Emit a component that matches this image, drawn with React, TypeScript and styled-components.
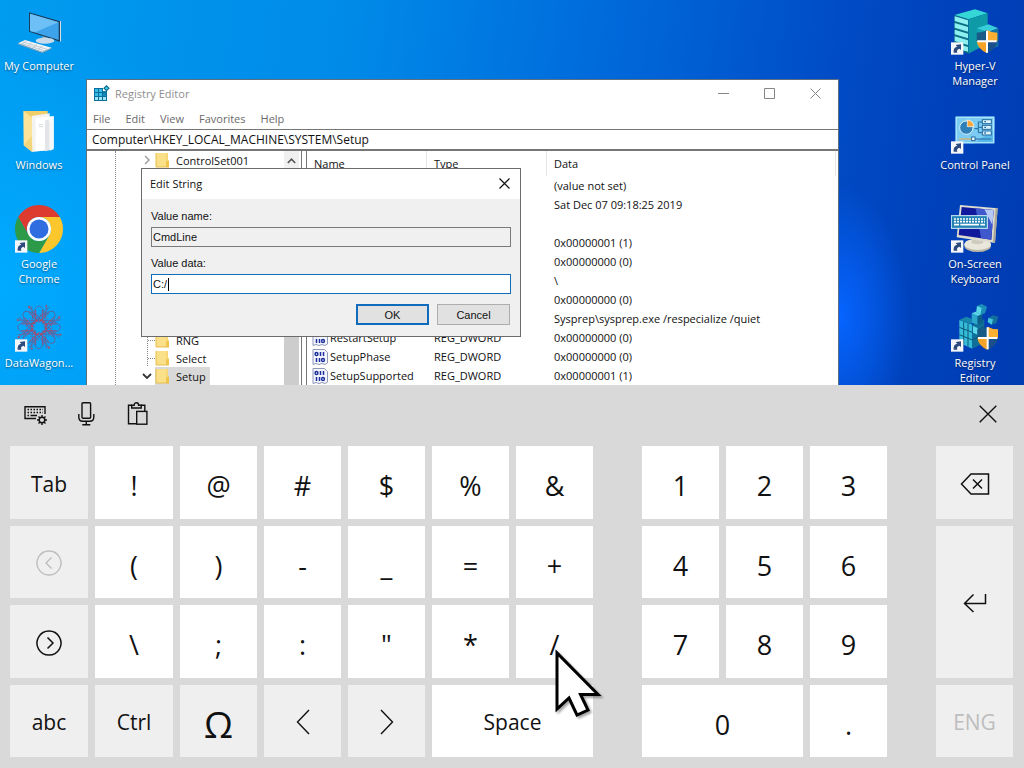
import React from "react";
import styled, { createGlobalStyle } from "styled-components";

const GlobalStyle = createGlobalStyle`
  *, *::before, *::after { box-sizing: border-box; }
  html, body, #root { height: 100%; margin: 0; }
  body { font-family: "Open Sans", "Noto Sans", sans-serif; font-size: 11px; color: #111; overflow: hidden; }
  button, input { font: inherit; color: inherit; margin: 0; padding: 0; border: 0; background: none; border-radius: 0; outline: 0; }
  svg { display: block; flex: none; }
`;

const Screen = styled.div`
  display: flex;
  flex-direction: column;
  height: 100vh;
`;

/* ---------- Desktop ---------- */

const Desktop = styled.main`
  position: relative;
  flex: 1;
  min-height: 0;
  overflow: hidden;
  display: flex;
  justify-content: space-between;
  padding: 7px 10px 0 0;
  background:
    radial-gradient(ellipse 70px 130px at 82% 82%, #0664ff 0, rgba(6, 100, 255, 0) 100%),
    radial-gradient(circle at 0 75%, #00aaff 0, rgba(0, 170, 255, 0) 260px),
    linear-gradient(98deg, #009cf0 0%, #008ae8 33%, #0068da 58%, #004cc6 78%, #0042bc 88%, #003cb2 100%);
`;

const ShortcutColumn = styled.nav`
  display: grid;
  grid-auto-rows: 99px;
  width: 78px;
`;

const ShortcutLink = styled.a`
  display: flex;
  flex-direction: column;
  align-items: center;
  gap: 3px;
  color: #fff;
  line-height: 15px;
  text-align: center;
  text-decoration: none;
  text-shadow: 0 1px 2px rgba(0, 0, 0, 0.5);
`;

const ShortcutLabel = styled.span`
  white-space: pre-line;
`;

/* ---------- Registry window ---------- */

const RegWindow = styled.section`
  position: absolute;
  top: 79px;
  left: 86px;
  right: 185px;
  bottom: 0;
  display: flex;
  flex-direction: column;
  background: #fff;
  border: 1px solid #5f6f80;
  border-bottom: 0;
`;

const TitleBar = styled.header`
  display: flex;
  align-items: center;
  height: 29px;
  padding: 0 0 2px 6px;
  gap: 5px;
  color: #8e8e8e;
`;

const Title = styled.h1`
  flex: 1;
  margin: 0;
  font-size: 11px;
  font-weight: 400;
`;

const CaptionButtons = styled.div`
  display: flex;
`;

const CaptionButton = styled.button`
  display: grid;
  place-items: center;
  width: 46px;
  height: 27px;
  color: #868686;
`;

const MenuBar = styled.nav`
  display: flex;
  gap: 15px;
  height: 20px;
  padding-left: 6px;
`;

const MenuItem = styled.button`
  line-height: 20px;
  color: #6a6a6a;
`;

const AddressInput = styled.input`
  width: 100%;
  height: 22px;
  padding-left: 5px;
  border-top: 1px solid #767676;
  border-bottom: 2px solid #767676;
  color: #111;
  font-size: 12px;
`;

const Panes = styled.div`
  flex: 1;
  display: flex;
  min-height: 0;
  overflow: hidden;
`;

const TreePane = styled.div`
  display: flex;
  flex: none;
  width: 215px;
  border-right: 1px solid #767676;
`;

const Tree = styled.ul`
  flex: 1;
  margin: 0 0 0 28px;
  padding: 0;
  border-left: 1px dotted #888;
  list-style: none;
  display: grid;
  grid-auto-rows: 18px;
  align-content: start;
`;

const TreeItem = styled.li<{ $line: number }>`
  grid-row: ${(p) => p.$line};
  display: flex;
  align-items: center;
  padding-left: 23px;
`;

const Twisty = styled.span<{ $faint?: boolean }>`
  display: grid;
  place-items: center;
  width: 16px;
  height: 18px;
  color: ${(p) => (p.$faint ? "#a0a0a0" : "#333")};
`;

const TreeLabel = styled.span<{ $selected?: boolean }>`
  display: flex;
  align-items: center;
  height: 18px;
  gap: 5px;
  padding-right: 4px;
  background: ${(p) => (p.$selected ? "#d9d9d9" : "none")};
`;

const ScrollBar = styled.div`
  display: flex;
  flex-direction: column;
  width: 15px;
  margin-right: 2px;
  background: #f0f0f0;
`;

const ScrollArrow = styled.button`
  display: grid;
  place-items: center;
  height: 17px;
  padding-top: 3px;
  color: #555;
`;

const ScrollThumb = styled.div`
  flex: 1;
  margin-top: 80px;
  background: #cdcdcd;
`;

const ListPane = styled.div`
  flex: 1;
  min-width: 0;
  margin-left: 4px;
  padding-right: 2px;
  border-left: 1px solid #767676;
`;

const ValueTable = styled.table`
  width: 100%;
  table-layout: fixed;
  border-collapse: separate;
  border-spacing: 0;
  th {
    height: 25px;
    padding: 0 0 0 7px;
    border-right: 1px solid #e5e5e5;
    font-weight: 400;
    text-align: left;
  }
  td {
    height: 19px;
    padding: 0 0 0 7px;
    line-height: 19px;
    white-space: nowrap;
  }
  td:first-child { padding-left: 5px; }
  col.fixed { width: 120px; }
`;

const ValueName = styled.span`
  display: flex;
  align-items: center;
  gap: 2px;
`;

/* ---------- Edit dialog ---------- */

const Dialog = styled.form`
  position: absolute;
  top: 168px;
  left: 141px;
  width: 380px;
  border: 1px solid #6b6b6b;
  background: #f0f0f0;
`;

const DialogTitle = styled.header`
  display: flex;
  align-items: center;
  justify-content: space-between;
  height: 30px;
  padding: 0 0 2px 8px;
  background: #fff;
`;

const DialogClose = styled.button`
  display: grid;
  place-items: center;
  width: 31px;
  height: 28px;
`;

const DialogBody = styled.div`
  display: flex;
  flex-direction: column;
  gap: 6px;
  padding: 7px 9px 11px;
  font-family: "Liberation Sans", Arial, sans-serif;
`;

const Field = styled.div`
  display: flex;
  flex-direction: column;
  gap: 1px;
  label { line-height: 20px; }
`;

const FieldBox = styled.div<{ $active?: boolean }>`
  display: flex;
  align-items: center;
  height: 20px;
  padding-left: 1px;
  border: 1px solid ${(p) => (p.$active ? "#0f6cbd" : "#7a7a7a")};
  background: ${(p) => (p.$active ? "#fff" : "#f0f0f0")};
  input { field-sizing: content; min-width: 4px; }
`;

const Caret = styled.span`
  width: 1px;
  height: 13px;
  margin-left: 1px;
  background: #000;
`;

const DialogActions = styled.div`
  display: flex;
  justify-content: flex-end;
  gap: 8px;
  padding: 4px 1px 0 0;
`;

const PushButton = styled.button<{ $default?: boolean }>`
  width: 73px;
  height: 21px;
  border: ${(p) => (p.$default ? "2px solid #0f6cbd" : "1px solid #adadad")};
  background: #e1e1e1;
`;

/* ---------- Touch keyboard ---------- */

const Keyboard = styled.section`
  display: flex;
  flex-direction: column;
  height: calc(50% - 1px);
  padding: 0 11px 11px 10px;
  background: #d9d9d9;
`;

const KeyboardTools = styled.div`
  display: flex;
  height: 61px;
  padding-bottom: 3px;
`;

const ToolButton = styled.button<{ $end?: boolean }>`
  display: grid;
  place-items: center;
  width: 51px;
  margin-left: ${(p) => (p.$end ? "auto" : "0")};
`;

const KeyGrid = styled.div`
  flex: 1;
  min-height: 0;
  display: grid;
  grid-template-columns: repeat(2, minmax(78px, 1fr)) repeat(5, 1fr) 35px repeat(3, 1fr) 35px 1fr;
  grid-template-rows: repeat(4, 1fr);
  gap: 7px;
`;

type Kind = "char" | "word" | "fn" | "omega";

const keySizes = { char: "27px", word: "21px", fn: "21px", omega: "37px" };

const Key = styled.button<{ $kind: Kind; $col: number; $row: number; $cols?: number; $rows?: number }>`
  position: relative;
  grid-column: ${(p) => p.$col} / span ${(p) => p.$cols ?? 1};
  grid-row: ${(p) => p.$row} / span ${(p) => p.$rows ?? 1};
  display: flex;
  align-items: center;
  justify-content: center;
  padding-top: ${(p) => (p.$kind === "char" ? "8px" : p.$kind === "omega" ? "6px" : "3px")};
  background: ${(p) => (p.$kind === "char" || p.$kind === "word" ? "#fff" : "#efefef")};
  font-size: ${(p) => keySizes[p.$kind]};
  line-height: 40px;
  color: #111;
  &:disabled { color: #bdbdbd; }
`;

const Pointer = styled.svg`
  position: absolute;
  z-index: 2;
  top: 42px;
  left: 50%;
  filter: drop-shadow(2px 2px 1px rgba(0, 0, 0, 0.35));
`;

/* ---------- Drawings ---------- */

const LinkBadge = () => (
  <g>
    <rect x="0" y="106" width="37" height="37" fill="#f4f6fa" />
    <path d="M8 137 C7 124 12 120 19 120 L14 114 L30 112 L30 129 L25 125 C18 127 17 131 19 137 Z" fill="#2c4a7c" />
  </g>
);

const Icon48 = ({ children, linked }: { children: React.ReactNode; linked?: boolean }) => (
  <svg width="48" height="48" viewBox="0 0 144 144" aria-hidden="true">
    {children}
    {linked && <LinkBadge />}
  </svg>
);

const ShieldArt = () => (
  <g transform="translate(77 69)">
    <path d="M0 8 Q18 8 31 0 V34 H0 Z" fill="#175b86" />
    <path d="M31 0 Q44 8 62 8 V34 H31 Z" fill="#fbb034" />
    <path d="M0 34 H31 V70 Q4 58 0 34 Z" fill="#f6a327" />
    <path d="M62 34 H31 V70 Q58 58 62 34 Z" fill="#1b4f8c" />
    <path d="M31 2 V68 M2 34 H60" stroke="#fff" strokeWidth="6" />
  </g>
);

const ComputerArt = () => (
  <Icon48>
    <path d="M42 16 L135 43 V104 L42 74 Z" fill="#1b3f5c" />
    <path d="M45 20 L131 46 V99 L45 72 Z" fill="#3da3ea" />
    <path d="M45 20 L131 46 L60 76 L45 72 Z" fill="#6cc0f5" />
    <path d="M135 43 L138 42 V103 L135 104 Z" fill="#d7dde2" />
    <path d="M82 88 L100 93 V100 H82 Z" fill="#9fb4c4" />
    <ellipse cx="90" cy="101" rx="28" ry="9" fill="#c9dbea" />
    <path d="M9 109 L30 99 L110 122 L82 135 Z" fill="#eef2f5" />
    <path d="M9 109 L82 135 L110 122 V125 L82 138 L9 112 Z" fill="#8ea2b2" />
    <path d="M17 109 L88 131 M24 105 L96 127 M34 102 L22 112 M50 107 L38 118 M66 112 L54 123 M82 117 L70 128" stroke="#aebac4" strokeWidth="2" />
  </Icon48>
);

const FolderArt = () => (
  <Icon48>
    <path d="M26 15 H98 V130 H40 Z" fill="#f0cf6a" />
    <path d="M50 30 L104 22 V132 L50 138 Z" fill="#f3f3f1" />
    <path d="M62 36 L116 30 V126 L104 132 L62 136 Z" fill="#fff" />
    <path d="M90 44 Q100 38 104 46 V132 L90 136 Z" fill="#e3e5e8" />
    <path d="M104 46 L116 30 V130 L104 134 Z" fill="#f7f8f9" />
    <path d="M70 56 H84 M72 62 H84" stroke="#c9ccd0" strokeWidth="2" />
    <path d="M25 15 L50 34 L52 138 L26 118 Z" fill="#fbe49a" />
    <path d="M26 118 L52 138 L50 90 Z" fill="#f3d67c" />
  </Icon48>
);

const ChromeArt = () => (
  <Icon48 linked>
    <g transform="scale(3)">
      <path d="M3.22 12 A24 24 0 0 1 44.78 12 H24 A12 12 0 0 0 13.61 30 Z" fill="#dd3b30" />
      <path d="M44.78 12 A24 24 0 0 1 24 48 L34.39 30 A12 12 0 0 0 24 12 Z" fill="#fcc62d" />
      <path d="M24 48 A24 24 0 0 1 3.22 12 L13.61 30 A12 12 0 0 0 34.39 30 Z" fill="#2c9a48" />
      <circle cx="24" cy="24" r="12" fill="#fff" />
      <circle cx="24" cy="24" r="9.5" fill="#2f6de0" />
    </g>
  </Icon48>
);

const RosetteArt = () => (
  <Icon48 linked>
    <g fill="none" strokeWidth="3" transform="translate(72 70)">
      {[0, 45, 90, 135].map((a) => (
        <g key={a} transform={`rotate(${a})`}>
          <ellipse rx="64" ry="22" stroke="#5668a4" />
          <path d="M14 0 L36 20 L64 22 M14 0 L36 -20 L64 -22 M-14 0 L-36 20 L-64 22 M-14 0 L-36 -20 L-64 -22" stroke="#5c6ca8" />
          <path d="M20 6 L44 30 M20 -6 L44 -30 M-20 6 L-44 30 M-20 -6 L-44 -30" stroke="#94507c" />
          <circle cx="64" cy="22" r="2" stroke="#a8506f" />
          <circle cx="-64" cy="-22" r="2" stroke="#a8506f" />
        </g>
      ))}
      <circle r="21" stroke="#b04a66" strokeWidth="6" strokeDasharray="7 4" />
      <circle r="38" stroke="#8c5484" strokeDasharray="5 7" />
    </g>
  </Icon48>
);

const HyperVArt = () => (
  <Icon48 linked>
    <path d="M10 24 L72 7 L110 19 L52 37 Z" fill="#35d6d6" />
    <path d="M52 37 L110 19 V110 L52 140 Z" fill="#0f9aa8" />
    <path d="M10 24 L52 37 V140 L10 122 Z" fill="#0c6f83" />
    {[0, 20, 40, 60, 80].map((y) => (
      <path key={y} d={`M11 ${28 + y} L51 ${40 + y} V${54 + y} L11 ${42 + y} Z`} fill="#8deff0" />
    ))}
    <path d="M77 64 L112 52 L142 64 L110 76 Z" fill="#37cdd9" />
    <path d="M77 64 L110 76 V130 L77 120 Z" fill="#12a3b4" />
    <path d="M142 64 L110 76 V130 L142 118 Z" fill="#1572a0" />
    <ShieldArt />
  </Icon48>
);

const ControlPanelArt = () => (
  <Icon48 linked>
    <rect x="14" y="32" width="116" height="80" fill="#58b8ea" />
    <path d="M14 32 H130 V70 L70 112 H14 Z" fill="#7ccbf2" />
    <rect x="16" y="34" width="112" height="76" fill="none" stroke="#a9e2fb" strokeWidth="4" />
    <circle cx="46" cy="65" r="20" fill="#2f7fb8" stroke="#dff3fc" strokeWidth="3" />
    <path d="M49 62 V42 A20 20 0 0 1 69 62 Z" fill="#f7a83a" stroke="#fff" strokeWidth="2" />
    <path d="M70 68 H82 V48 H94 M82 64 H94 M82 68 V80 H94" fill="none" stroke="#226a9d" strokeWidth="3" />
    {[41, 58, 75].map((y) => (
      <g key={y}>
        <rect x="94" y={y} width="27" height="12" fill="#d9f2fc" stroke="#226a9d" strokeWidth="3" />
        <path d={`M100 ${y + 6} H105`} stroke="#226a9d" strokeWidth="4" />
      </g>
    ))}
    <path d="M24 99 H60" stroke="#f7a83a" strokeWidth="3" />
    <path d="M72 99 H121" stroke="#226a9d" strokeWidth="3" />
    <rect x="62" y="93" width="10" height="11" fill="#fff" stroke="#226a9d" strokeWidth="3" />
  </Icon48>
);

const OnScreenKeyboardArt = () => (
  <Icon48 linked>
    <ellipse cx="80" cy="122" rx="40" ry="19" fill="#b9b6a8" />
    <ellipse cx="80" cy="118" rx="40" ry="17" fill="#e9e7dc" />
    <path d="M62 96 H96 V114 Q80 122 62 114 Z" fill="#cfccbf" />
    <path d="M27 0 L140 10 L132 114 L17 97 Z" fill="#dedccf" />
    <path d="M140 10 L134 8 L126 112 L132 114 Z" fill="#a9a698" />
    <path d="M32 6 L128 15 L121 104 L23 90 Z" fill="#10189c" />
    <path d="M74 10 L128 15 L121 104 L90 99 Z" fill="#3f58cc" />
    <path d="M100 13 L128 15 L124 60 Z" fill="#b6c8f4" />
    <rect x="1" y="32" width="108" height="38" fill="#2382b4" stroke="#d7eef8" strokeWidth="3" />
    <path d="M9 42 H102 M9 50 H102" stroke="#fff" strokeWidth="5" strokeDasharray="6 3" />
    <path d="M9 59 H24 M28 59 H84 M88 59 H102" stroke="#fff" strokeWidth="5" />
  </Icon48>
);

const RegistryArt = () => (
  <Icon48 linked>
    <path d="M25 48 L64 62 V134 L25 116 Z" fill="#35bcd8" />
    <path d="M64 62 L100 46 V116 L64 134 Z" fill="#0f6f96" />
    <path d="M25 48 L46 38 L62 44 L62 60 Z" fill="#1787ab" />
    <path d="M62 28 L80 36 V62 L62 56 Z" fill="#2aa7c9" />
    <path d="M80 36 L94 30 V56 L80 62 Z" fill="#0d5f86" />
    <path d="M62 28 L78 22 L94 30 L80 36 Z" fill="#5bd5e8" />
    <path d="M38 53 V122 M51 58 V128 M25 70 L64 85 M25 92 L64 108 M64 85 L100 68 M64 108 L100 90" stroke="#0c5878" strokeWidth="3" />
    <path d="M66 66 L80 72 V92 L66 86 Z" fill="#5bd5e8" />
    <path d="M78 6 L92 0 L108 8 L102 28 L88 32 L76 24 Z" fill="#1c8fb8" />
    <path d="M78 6 L92 12 L88 32 L76 24 Z" fill="#5bd5e8" />
    <path d="M112 42 L126 34 L142 38 L136 58 L122 62 L110 54 Z" fill="#136f9c" />
    <path d="M112 42 L126 46 L122 62 L110 54 Z" fill="#45c4de" />
    <g transform="translate(2 -1)">
      <ShieldArt />
    </g>
  </Icon48>
);

const RegistrySmall = () => (
  <svg width="17" height="17" viewBox="0 0 17 17" aria-hidden="true">
    <rect x="1" y="3" width="13" height="13" fill="#0a6f9c" />
    {[0, 1, 2].map((r) =>
      [0, 1, 2].map((c) => (
        <rect key={`${r}${c}`} x={2 + c * 4} y={4 + r * 4} width="3" height="3" fill={r === 2 ? "#9fe4f7" : c === 2 ? "#1688b8" : "#35bde6"} />
      ))
    )}
    <path d="M10 1 H17 V6 H10 Z" fill="#fff" />
    <path d="M13.5 0 L16.8 3.3 L13.5 6.6 L10.2 3.3 Z" fill="#0a6c8c" />
    <circle cx="13.5" cy="3.3" r="1.2" fill="#4fd0ea" />
  </svg>
);

const FolderSmall = () => (
  <svg width="16" height="16" viewBox="0 0 16 16" aria-hidden="true">
    <path d="M1 1 H13 V15 H1 Z" fill="#f7d775" />
    <path d="M1 1 H11 V15 H1 Z" fill="#fbe08a" />
    <path d="M11 10 L14 8 V15 H11 Z" fill="#f0c54e" />
    <path d="M1 1 V15 H14" fill="none" stroke="#e6bd4a" />
  </svg>
);

const BinaryValue = () => (
  <svg width="16" height="16" viewBox="0 0 16 16" aria-hidden="true">
    <path d="M1 .5 H12.5 L15.5 3.5 V14 L13 15.5 L10 14.5 L7 15.5 L4 14.5 L1 15.5 Z" fill="#f4f6ff" stroke="#8f97b8" />
    <g fill="none" stroke="#1d2f9c" strokeWidth="1.5">
      <ellipse cx="4.5" cy="5" rx="1.4" ry="1.6" />
      <path d="M8.5 3 V7 M11.5 3 V7 M4.5 9 V13 M7.5 9 V13" />
      <ellipse cx="11" cy="11" rx="1.4" ry="1.6" />
    </g>
  </svg>
);

const Line = ({ w, h, d, s = 1 }: { w: number; h: number; d: string; s?: number }) => (
  <svg width={w} height={h} viewBox={`0 0 ${w} ${h}`} fill="none" stroke="currentColor" strokeWidth={s} aria-hidden="true">
    <path d={d} />
  </svg>
);

const KeyboardSettings = () => (
  <svg width="24" height="24" viewBox="0 0 24 24" fill="none" stroke="#111" strokeWidth="1.4" aria-hidden="true">
    <path d="M12 16.5 H1 V4.7 H21 V12" />
    <path d="M3.5 7.5 H19 M3.5 10.5 H19" strokeDasharray="1.5 1.5" />
    <path d="M3.5 13.5 H5 M6.5 13.5 H13" />
    <circle cx="18" cy="18" r="2.8" />
    <path d="M18 13 V15 M18 21 V23 M13 18 H15 M21 18 H23 M14.5 14.5 L16 16 M20 20 L21.5 21.5 M14.5 21.5 L16 20 M20 16 L21.5 14.5" />
  </svg>
);

const Microphone = () => (
  <svg width="24" height="24" viewBox="0 0 24 24" fill="none" stroke="#111" strokeWidth="1.4" aria-hidden="true">
    <rect x="7" y="0.8" width="8.6" height="15.4" rx="1" />
    <path d="M3.8 12 V15 Q3.8 19.3 7.8 19.3 H14.8 Q18.8 19.3 18.8 15 V12 M11.3 19.3 V22.7 M7.3 22.7 H15.3" />
  </svg>
);

const Clipboard = () => (
  <svg width="24" height="24" viewBox="0 0 24 24" fill="none" stroke="#111" strokeWidth="1.4" aria-hidden="true">
    <path d="M10 21.8 H2.5 V3.2 H6 M14.5 3.2 H18.8 V9" />
    <path d="M5.7 6 V3.2 H8.2 Q8.2 0.8 10.4 0.8 Q12.6 0.8 12.6 3.2 H15.2 V6 Z" />
    <rect x="10.7" y="9.4" width="10.2" height="12.8" />
  </svg>
);

/* ---------- Data ---------- */

const leftShortcuts = [
  { label: "My Computer", art: <ComputerArt /> },
  { label: "Windows", art: <FolderArt /> },
  { label: "Google\nChrome", art: <ChromeArt /> },
  { label: "DataWagon...", art: <RosetteArt /> },
];

const rightShortcuts = [
  { label: "Hyper-V\nManager", art: <HyperVArt /> },
  { label: "Control Panel", art: <ControlPanelArt /> },
  { label: "On-Screen\nKeyboard", art: <OnScreenKeyboardArt /> },
  { label: "Registry\nEditor", art: <RegistryArt /> },
];

const treeItems = [
  { line: 1, label: "ControlSet001", twisty: "closed" },
  { line: 11, label: "RNG", twisty: "none" },
  { line: 12, label: "Select", twisty: "none" },
  { line: 13, label: "Setup", twisty: "open", selected: true },
];

const values: { name?: string; type?: string; data: string }[] = [
  { data: "(value not set)" },
  { data: "Sat Dec 07 09:18:25 2019" },
  { data: "" },
  { data: "0x00000001 (1)" },
  { data: "0x00000000 (0)" },
  { data: "\\" },
  { data: "0x00000000 (0)" },
  { data: "Sysprep\\sysprep.exe /respecialize /quiet" },
  { name: "RestartSetup", type: "REG_DWORD", data: "0x00000000 (0)" },
  { name: "SetupPhase", type: "REG_DWORD", data: "0x00000000 (0)" },
  { name: "SetupSupported", type: "REG_DWORD", data: "0x00000001 (1)" },
];

const symbolRows = ["!@#$%&", "()-_=+", "\\;:\"*/"];
const digitRows = ["123", "456", "789"];

const Shortcuts = ({ items }: { items: typeof leftShortcuts }) => (
  <ShortcutColumn>
    {items.map((s) => (
      <ShortcutLink href="#" key={s.label}>
        {s.art}
        <ShortcutLabel>{s.label}</ShortcutLabel>
      </ShortcutLink>
    ))}
  </ShortcutColumn>
);

const TwistyMark = ({ state }: { state: string }) => {
  if (state === "closed") return <Line w={8} h={10} d="M2 1 L6 5 L2 9" s={1.5} />;
  if (state === "open") return <Line w={10} h={8} d="M1 2 L5 6 L9 2" s={1.8} />;
  return (
    <svg width="16" height="18" viewBox="0 0 16 18" fill="none" stroke="#888" strokeDasharray="1 1" aria-hidden="true">
      <path d="M8.5 0 V18 M9 9.5 H16" />
    </svg>
  );
};

export default function App() {
  return (
    <Screen>
      <GlobalStyle />
      <Desktop>
        <Shortcuts items={leftShortcuts} />
        <Shortcuts items={rightShortcuts} />

        <RegWindow>
          <TitleBar>
            <RegistrySmall />
            <Title>Registry Editor</Title>
            <CaptionButtons>
              <CaptionButton aria-label="Minimize"><Line w={11} h={11} d="M0 5.5 H11" /></CaptionButton>
              <CaptionButton aria-label="Maximize"><Line w={11} h={11} d="M.5 .5 H10.5 V10.5 H.5 Z" /></CaptionButton>
              <CaptionButton aria-label="Close"><Line w={11} h={11} d="M.5 .5 L10.5 10.5 M10.5 .5 L.5 10.5" /></CaptionButton>
            </CaptionButtons>
          </TitleBar>
          <MenuBar>
            {["File", "Edit", "View", "Favorites", "Help"].map((m) => (
              <MenuItem key={m}>{m}</MenuItem>
            ))}
          </MenuBar>
          <AddressInput aria-label="Address" defaultValue="Computer\HKEY_LOCAL_MACHINE\SYSTEM\Setup" />
          <Panes>
            <TreePane>
              <Tree>
                {treeItems.map((t) => (
                  <TreeItem key={t.label} $line={t.line}>
                    <Twisty $faint={t.twisty === "closed"}><TwistyMark state={t.twisty} /></Twisty>
                    <TreeLabel $selected={t.selected}>
                      <FolderSmall />
                      {t.label}
                    </TreeLabel>
                  </TreeItem>
                ))}
              </Tree>
              <ScrollBar>
                <ScrollArrow aria-label="Scroll up"><Line w={9} h={6} d="M.8 5 L4.5 1.2 L8.2 5" s={1.6} /></ScrollArrow>
                <ScrollThumb />
              </ScrollBar>
            </TreePane>
            <ListPane>
              <ValueTable>
                <colgroup>
                  <col className="fixed" />
                  <col className="fixed" />
                  <col />
                </colgroup>
                <thead>
                  <tr><th>Name</th><th>Type</th><th>Data</th></tr>
                </thead>
                <tbody>
                  {values.map((v, i) => (
                    <tr key={i}>
                      <td>{v.name && <ValueName><BinaryValue />{v.name}</ValueName>}</td>
                      <td>{v.type}</td>
                      <td>{v.data}</td>
                    </tr>
                  ))}
                </tbody>
              </ValueTable>
            </ListPane>
          </Panes>
        </RegWindow>

        <Dialog onSubmit={(e) => e.preventDefault()}>
          <DialogTitle>
            Edit String
            <DialogClose type="button" aria-label="Close dialog">
              <Line w={11} h={11} d="M.5 .5 L10.5 10.5 M10.5 .5 L.5 10.5" s={1.2} />
            </DialogClose>
          </DialogTitle>
          <DialogBody>
            <Field>
              <label htmlFor="value-name">Value name:</label>
              <FieldBox><input id="value-name" readOnly value="CmdLine" /></FieldBox>
            </Field>
            <Field>
              <label htmlFor="value-data">Value data:</label>
              <FieldBox $active>
                <input id="value-data" defaultValue="C:/" />
                <Caret />
              </FieldBox>
            </Field>
            <DialogActions>
              <PushButton $default>OK</PushButton>
              <PushButton type="button">Cancel</PushButton>
            </DialogActions>
          </DialogBody>
        </Dialog>
      </Desktop>

      <Keyboard aria-label="Touch keyboard">
        <KeyboardTools>
          <ToolButton aria-label="Keyboard settings"><KeyboardSettings /></ToolButton>
          <ToolButton aria-label="Dictation"><Microphone /></ToolButton>
          <ToolButton aria-label="Clipboard"><Clipboard /></ToolButton>
          <ToolButton $end aria-label="Close keyboard"><Line w={18} h={18} d="M.7 .7 L17.3 17.3 M17.3 .7 L.7 17.3" s={1.4} /></ToolButton>
        </KeyboardTools>
        <KeyGrid>
          <Key $kind="fn" $col={1} $row={1}>Tab</Key>
          <Key $kind="fn" $col={1} $row={2} disabled aria-label="Previous page">
            <Line w={26} h={26} d="M13 1 A12 12 0 1 1 12.99 1 Z M15.5 7.5 L10 13 L15.5 18.5" s={1.4} />
          </Key>
          <Key $kind="fn" $col={1} $row={3} aria-label="Next page">
            <Line w={26} h={26} d="M13 1 A12 12 0 1 1 12.99 1 Z M11.5 7.5 L17 13 L11.5 18.5" s={1.5} />
          </Key>
          <Key $kind="fn" $col={1} $row={4}>abc</Key>
          {symbolRows.map((row, r) =>
            [...row].map((ch, c) => (
              <Key $kind="char" $col={c + 2} $row={r + 1} key={ch}>
                {ch}
                {ch === "/" && (
                  <Pointer width="50" height="70" viewBox="0 0 50 70" aria-hidden="true">
                    <path d="M2 6 V62 L14 51 L22 68 L33 63 L25.5 47.5 H43 Z" fill="#fff" stroke="#000" strokeWidth="3" />
                  </Pointer>
                )}
              </Key>
            ))
          )}
          {digitRows.map((row, r) =>
            [...row].map((ch, c) => (
              <Key $kind="char" $col={c + 9} $row={r + 1} key={ch}>{ch}</Key>
            ))
          )}
          <Key $kind="fn" $col={2} $row={4}>Ctrl</Key>
          <Key $kind="omega" $col={3} $row={4}>Ω</Key>
          <Key $kind="fn" $col={4} $row={4} aria-label="Move left"><Line w={14} h={26} d="M13 1 L1.5 13 L13 25" s={1.4} /></Key>
          <Key $kind="fn" $col={5} $row={4} aria-label="Move right"><Line w={14} h={26} d="M1 1 L12.5 13 L1 25" s={1.4} /></Key>
          <Key $kind="word" $col={6} $row={4} $cols={2}>Space</Key>
          <Key $kind="char" $col={9} $row={4} $cols={2}>0</Key>
          <Key $kind="char" $col={11} $row={4}>.</Key>
          <Key $kind="fn" $col={13} $row={1} aria-label="Backspace">
            <Line w={30} h={22} d="M1.5 11 L11 1 H28.5 V21 H11 Z M13 6.5 L22 15.5 M22 6.5 L13 15.5" s={1.5} />
          </Key>
          <Key $kind="fn" $col={13} $row={2} $rows={2} aria-label="Enter">
            <Line w={24} h={20} d="M22.5 1 V10.5 H2 M10.5 1.5 L1.5 10.5 L10.5 19" s={1.5} />
          </Key>
          <Key $kind="fn" $col={13} $row={4} disabled>ENG</Key>
        </KeyGrid>
      </Keyboard>
    </Screen>
  );
}
